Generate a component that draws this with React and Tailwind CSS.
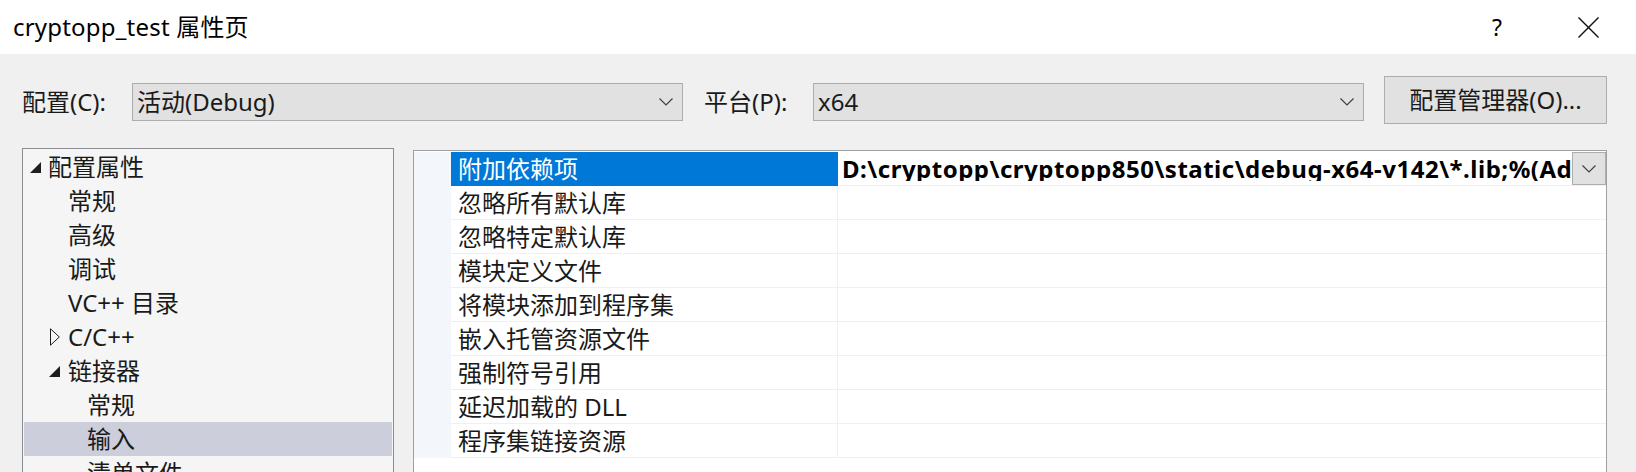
import React from "react";

const Chevron = ({ className = "" }) => (
  <svg width="14" height="8" viewBox="0 0 14 8" className={className}>
    <polyline points="0.5,0.5 7,7 13.5,0.5" fill="none" stroke="#404040" strokeWidth="1.2" />
  </svg>
);

const Expanded = () => (
  <svg width="11" height="11" viewBox="0 0 11 11">
    <polygon points="11,0 11,11 0,11" fill="#1e1e1e" />
  </svg>
);

const Collapsed = () => (
  <svg width="10" height="18" viewBox="0 0 10 18">
    <polygon points="0.5,0.8 9.3,9 0.5,17.2" fill="none" stroke="#1e1e1e" strokeWidth="1" />
  </svg>
);

const tree = [
  { label: "配置属性", indent: 0, icon: "exp" },
  { label: "常规", indent: 1 },
  { label: "高级", indent: 1 },
  { label: "调试", indent: 1 },
  { label: "VC++ 目录", indent: 1 },
  { label: "C/C++", indent: 1, icon: "col" },
  { label: "链接器", indent: 1, icon: "exp" },
  { label: "常规", indent: 2 },
  { label: "输入", indent: 2, selected: true },
  { label: "清单文件", indent: 2 },
];

const props = [
  "附加依赖项",
  "忽略所有默认库",
  "忽略特定默认库",
  "模块定义文件",
  "将模块添加到程序集",
  "嵌入托管资源文件",
  "强制符号引用",
  "延迟加载的 DLL",
  "程序集链接资源",
];

export default function App() {
  return (
    <div className="w-[1636px] h-[472px] overflow-hidden bg-[#f0f0f0] text-[#1a1a1a] font-['Noto_Sans','Noto_Sans_CJK_SC',sans-serif]">
      {/* Title bar */}
      <div className="h-[54px] bg-white flex items-center">
        <div className="pl-[13px] text-[24px] leading-none text-black tracking-[0.2px]">cryptopp_test 属性页</div>
        <div className="ml-auto flex items-center">
          <div className="text-[23px] leading-none text-black mr-[76px]">?</div>
          <svg width="21" height="21" viewBox="0 0 21 21" className="mr-[37px]">
            <line x1="0.5" y1="0.5" x2="20.5" y2="20.5" stroke="#111" strokeWidth="1.4" />
            <line x1="20.5" y1="0.5" x2="0.5" y2="20.5" stroke="#111" strokeWidth="1.4" />
          </svg>
        </div>
      </div>

      {/* Toolbar */}
      <div className="h-[94px] flex items-start pl-[22px] pt-[22px]">
        <div className="w-[110px] mt-[7px] h-[38px] flex items-center text-[24px]">配置(C):</div>
        <div className="w-[551px] mt-[7px] h-[38px] bg-[#e1e1e1] border border-[#adadad] flex items-center pl-[4px] pr-[9px] text-[24px]">
          <span className="flex-1">活动(Debug)</span>
          <Chevron />
        </div>
        <div className="ml-[21px] w-[109px] mt-[7px] h-[38px] flex items-center text-[24px]">平台(P):</div>
        <div className="w-[551px] mt-[7px] h-[38px] bg-[#e1e1e1] border border-[#adadad] flex items-center pl-[4px] pr-[9px] text-[24px]">
          <span className="flex-1">x64</span>
          <Chevron />
        </div>
        <div className="ml-[20px] w-[223px] h-[48px] bg-[#e1e1e1] border border-[#adadad] flex items-center justify-center text-[24px]">
          配置管理器(O)...
        </div>
      </div>

      {/* Panels */}
      <div className="flex items-start pl-[22px]">
        <div className="w-[372px] h-[340px] border border-[#8c8d92] bg-[#f5f5f5] pt-[1px] px-[1px]">
          {tree.map((t, i) => (
            <div
              key={i}
              className={`h-[34px] flex items-center text-[24px] leading-none ${t.selected ? "bg-[#cccedb]" : ""}`}
            >
              <div
                className={`flex items-center justify-end shrink-0 ${
                  t.indent === 0 ? "w-[24px] pr-[7px]" : t.indent === 1 ? "w-[44px] pr-[8px]" : "w-[63px]"
                }`}
              >
                {t.icon === "exp" && <Expanded />}
                {t.icon === "col" && <Collapsed />}
              </div>
              <span>{t.label}</span>
            </div>
          ))}
        </div>

        <div className="ml-[19px] mt-[2px] w-[1194px] h-[340px] border border-[#a0a0a0] bg-white pt-[1px]">
          {props.map((p, i) => (
            <div key={i} className="h-[34px] flex">
              <div className="w-[37px] shrink-0 bg-[#f3f6fb]" />
              <div
                className={`w-[387px] shrink-0 flex items-center pl-[7px] text-[24px] leading-none border-b border-r ${
                  i === 0 ? "bg-[#0078d7] text-white border-b-[#0078d7] border-r-[#0078d7]" : "border-[#f0f0f0] text-[#1a1a1a]"
                }`}
              >
                {p}
              </div>
              <div className="flex-1 min-w-0 flex items-center border-b border-[#f0f0f0]">
                {i === 0 && (
                  <>
                    <div className="flex-1 min-w-0 overflow-hidden whitespace-nowrap pl-[4px] text-[24px] font-bold text-black leading-none tracking-[0.5px]">
                      D:\cryptopp\cryptopp850\static\debug-x64-v142\*.lib;%(Ad
                    </div>
                    <div className="w-[34px] h-[33px] shrink-0 bg-[#e1e1e1] border border-[#adadad] flex items-center justify-center">
                      <Chevron />
                    </div>
                  </>
                )}
              </div>
            </div>
          ))}
        </div>
      </div>
    </div>
  );
}
